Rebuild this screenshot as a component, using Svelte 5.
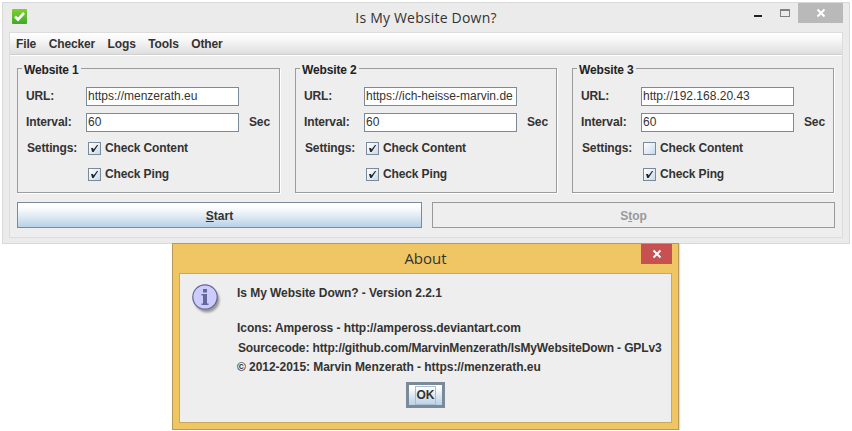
<script lang="ts">
  interface Site {
    title: string;
    url: string;
    content: boolean;
  }

  const sites: Site[] = [
    { title: 'Website 1', url: 'https://menzerath.eu', content: true },
    { title: 'Website 2', url: 'https://ich-heisse-marvin.de', content: true },
    { title: 'Website 3', url: 'http://192.168.20.43', content: false }
  ];

  const menus = ['File', 'Checker', 'Logs', 'Tools', 'Other'];
</script>

{#snippet check(on: boolean, label: string)}
  <span class="check">
    <span class="box">
      {#if on}
        <svg width="11" height="11" viewBox="0 0 11 11"><path d="M2 5 H4 L4.6 6.6 L8 2 H9.2 L4.6 9 H3.2 Z" fill="#222" /></svg>
      {/if}
    </span>
    {label}
  </span>
{/snippet}

<div class="main">
  <header class="titlebar">
    <svg class="appicon" width="15" height="15" viewBox="0 0 15 15">
      <defs>
        <linearGradient id="green" x1="0" y1="0" x2="0" y2="1">
          <stop offset="0" stop-color="#7fd02f" />
          <stop offset="1" stop-color="#3fa82c" />
        </linearGradient>
      </defs>
      <rect width="15" height="15" rx="1" fill="url(#green)" />
      <path d="M3 7.5 L6 10.5 L12 4" fill="none" stroke="#fff" stroke-width="2.6" />
    </svg>
    <span class="title">Is My Website Down?</span>
    <div class="controls">
      <span class="min"></span>
      <span class="max"></span>
      <span class="close">
        <svg width="10" height="10" viewBox="0 0 10 10"><path d="M1.5 1.5 L8.5 8.5 M8.5 1.5 L1.5 8.5" stroke="#fff" stroke-width="2" /></svg>
      </span>
    </div>
  </header>

  <div class="client">
    <nav class="menubar">
      {#each menus as menu}
        <span>{menu}</span>
      {/each}
    </nav>

    <div class="body">
      <div class="groups">
        {#each sites as site}
          <fieldset class="group">
            <legend>{site.title}</legend>
            <div class="row">
              <span class="label">URL:</span>
              <span class="input">{site.url}</span>
            </div>
            <div class="row">
              <span class="label">Interval:</span>
              <span class="input">60</span>
              <span class="unit">Sec</span>
            </div>
            <div class="row">
              <span class="label settings">Settings:</span>
              {@render check(site.content, 'Check Content')}
            </div>
            <div class="row">
              <span class="label"></span>
              {@render check(true, 'Check Ping')}
            </div>
          </fieldset>
        {/each}
      </div>

      <div class="actions">
        <button class="start"><u>S</u>tart</button>
        <button class="stop" disabled>S<u>t</u>op</button>
      </div>
    </div>
  </div>
</div>

<div class="about">
  <header class="about-title">
    <span>About</span>
    <span class="about-close">
      <svg width="10" height="10" viewBox="0 0 10 10"><path d="M1.5 1.5 L8.5 8.5 M8.5 1.5 L1.5 8.5" stroke="#fff" stroke-width="2" /></svg>
    </span>
  </header>
  <div class="about-body">
    <div class="about-top">
      <svg class="info" width="30" height="32" viewBox="0 0 30 32">
        <defs>
          <filter id="soft" x="-20%" y="-20%" width="150%" height="150%"><feGaussianBlur stdDeviation="1.2" /></filter>
        </defs>
        <circle cx="16" cy="17" r="12.5" fill="#999" filter="url(#soft)" />
        <circle cx="14" cy="14" r="12.2" fill="#ccccff" stroke="#666699" stroke-width="1.2" />
        <rect x="12" y="6" width="4" height="3.5" fill="#666699" />
        <rect x="12" y="11" width="4" height="10" fill="#666699" />
        <rect x="10.5" y="20.5" width="7" height="1.5" fill="#666699" />
        <rect x="10.5" y="11" width="2" height="1.5" fill="#666699" />
      </svg>
      <div class="about-text">
        <p>Is My Website Down? - Version 2.2.1</p>
        <p class="gap">Icons: Ampeross - http://ampeross.deviantart.com</p>
        <p class="source">Sourcecode: http://github.com/MarvinMenzerath/IsMyWebsiteDown - GPLv3</p>
        <p>© 2012-2015: Marvin Menzerath - https://menzerath.eu</p>
      </div>
    </div>
    <button class="ok"><span>OK</span></button>
  </div>
</div>

<style>
  :global(body) {
    background: #fff;
  }

  .main,
  .about {
    box-sizing: border-box;
    font: bold 12px "Liberation Sans", Arial, sans-serif;
    letter-spacing: -0.13px;
    color: #333;
  }

  .main {
    width: 848px;
    height: 242px;
    margin: 2px 0 0 2px;
    padding: 0 6px 5px;
    display: flex;
    flex-direction: column;
    background: #ebebeb;
    border: 1px solid #d9d9d9;
  }

  .titlebar {
    height: 29px;
    flex: none;
    display: flex;
    align-items: flex-start;
    position: relative;
  }

  .appicon {
    margin: 6px 0 0 3px;
  }

  .title {
    position: absolute;
    left: 0;
    right: 0;
    top: 5px;
    text-align: center;
    font: 14px "Open Sans", sans-serif;
    letter-spacing: 0.2px;
    color: #333;
  }

  .controls {
    position: absolute;
    right: 0;
    top: 0;
    display: flex;
    align-items: flex-start;
  }

  .min {
    width: 8px;
    height: 2px;
    margin: 12px 18px 0 0;
    background: #222;
  }

  .max {
    box-sizing: border-box;
    width: 10px;
    height: 8px;
    margin: 6px 8px 0 0;
    border: 1px solid #808080;
    border-top-width: 2px;
  }

  .close {
    width: 45px;
    height: 20px;
    background: #b9b9b9;
    display: flex;
    align-items: center;
    justify-content: center;
  }

  .client {
    flex: 1;
    display: flex;
    flex-direction: column;
    background: #eeeeee;
    border: 1px solid #dcdcdc;
  }

  .menubar {
    height: 21px;
    flex: none;
    display: flex;
    align-items: center;
    gap: 12.5px;
    padding: 0 6px;
    background: linear-gradient(#ffffff, #f8f8f8 30%, #dedede);
    border-bottom: 1px solid #d0d0d0;
    box-shadow: 0 1px 0 #fff;
  }

  .body {
    flex: 1;
    padding: 4px 8px 0 7px;
  }

  .groups {
    display: grid;
    grid-template-columns: 263px 262px 262px;
    column-gap: 15px;
  }

  .group {
    box-sizing: border-box;
    height: 134px;
    margin: 0;
    padding: 6px 0 0 8px;
    min-width: 0;
    border: 1px solid #9c9c9c;
    box-shadow: 1px 1px 0 #fff;
  }

  legend {
    padding: 4px 2px 0;
    margin-left: -4px;
    color: #222;
    line-height: 14px;
  }

  .row {
    height: 26px;
    display: flex;
    align-items: center;
  }

  .label {
    width: 60px;
    flex: none;
  }

  .settings {
    padding-left: 1px;
    box-sizing: border-box;
  }

  .input {
    box-sizing: border-box;
    width: 153px;
    height: 19px;
    flex: none;
    padding: 0 1px;
    overflow: hidden;
    white-space: nowrap;
    font: 12px/17px "Liberation Sans", Arial, sans-serif;
    letter-spacing: 0;
    color: #333;
    background: #fff;
    border: 1px solid #7a8a99;
  }

  .unit {
    margin-left: 10px;
  }

  .check {
    display: flex;
    align-items: center;
    gap: 4px;
    margin-left: 2px;
  }

  .box {
    box-sizing: border-box;
    width: 13px;
    height: 13px;
    display: flex;
    background: linear-gradient(135deg, #ffffff, #c8daeb);
    border: 1px solid #7a8a99;
  }

  .actions {
    display: grid;
    grid-template-columns: 405px 403px;
    column-gap: 10px;
    margin-top: 9px;
  }

  button {
    font: bold 12px "Liberation Sans", Arial, sans-serif;
    padding: 0;
    color: #333;
  }

  .start,
  .stop {
    height: 26px;
    padding-top: 1px;
  }

  .start {
    background: linear-gradient(#ffffff 10%, #f4f8fb 30%, #b9d1e6);
    border: 1px solid #7a8a99;
  }

  .stop {
    color: #999;
    background: #eeeeee;
    border: 1px solid #999;
  }

  .about {
    width: 507px;
    height: 187px;
    margin: -1px 0 0 172px;
    padding: 0 6px 6px;
    position: relative;
    display: flex;
    flex-direction: column;
    background: #f0c664;
    border: 1px solid #b89a58;
    box-shadow: 1px 1px 1px #ddd;
    letter-spacing: -0.05px;
  }

  .about-title {
    height: 29px;
    flex: none;
    font: 15px/29px "Open Sans", sans-serif;
    letter-spacing: 0;
    text-align: center;
    color: #333;
  }

  .about-close {
    position: absolute;
    right: 6px;
    top: 0;
    width: 31px;
    height: 20px;
    background: #c75050;
    display: flex;
    align-items: center;
    justify-content: center;
  }

  .about-body {
    flex: 1;
    display: flex;
    flex-direction: column;
    align-items: center;
    background: #eeeeee;
    border: 1px solid #c9a860;
  }

  .about-top {
    width: 100%;
    display: flex;
    padding: 9px 0 0 11px;
    box-sizing: border-box;
  }

  .info {
    flex: none;
  }

  .about-text {
    margin-left: 16px;
    padding-top: 1px;
  }

  .about-text p {
    margin: 0;
    line-height: 19.3px;
    white-space: nowrap;
  }

  .about-text .gap {
    margin-top: 16px;
  }

  .about-text .source {
    margin-left: 1px;
    letter-spacing: -0.13px;
  }

  .ok {
    box-sizing: border-box;
    width: 39px;
    height: 26px;
    margin-top: 5px;
    padding: 0;
    background: linear-gradient(#ffffff 10%, #b9d1e6);
    border: 3px solid #7a8a99;
  }

  .ok span {
    display: block;
    width: 19px;
    margin: 0 auto;
    line-height: 17px;
    outline: 1px solid #a8bdd0;
  }
</style>
